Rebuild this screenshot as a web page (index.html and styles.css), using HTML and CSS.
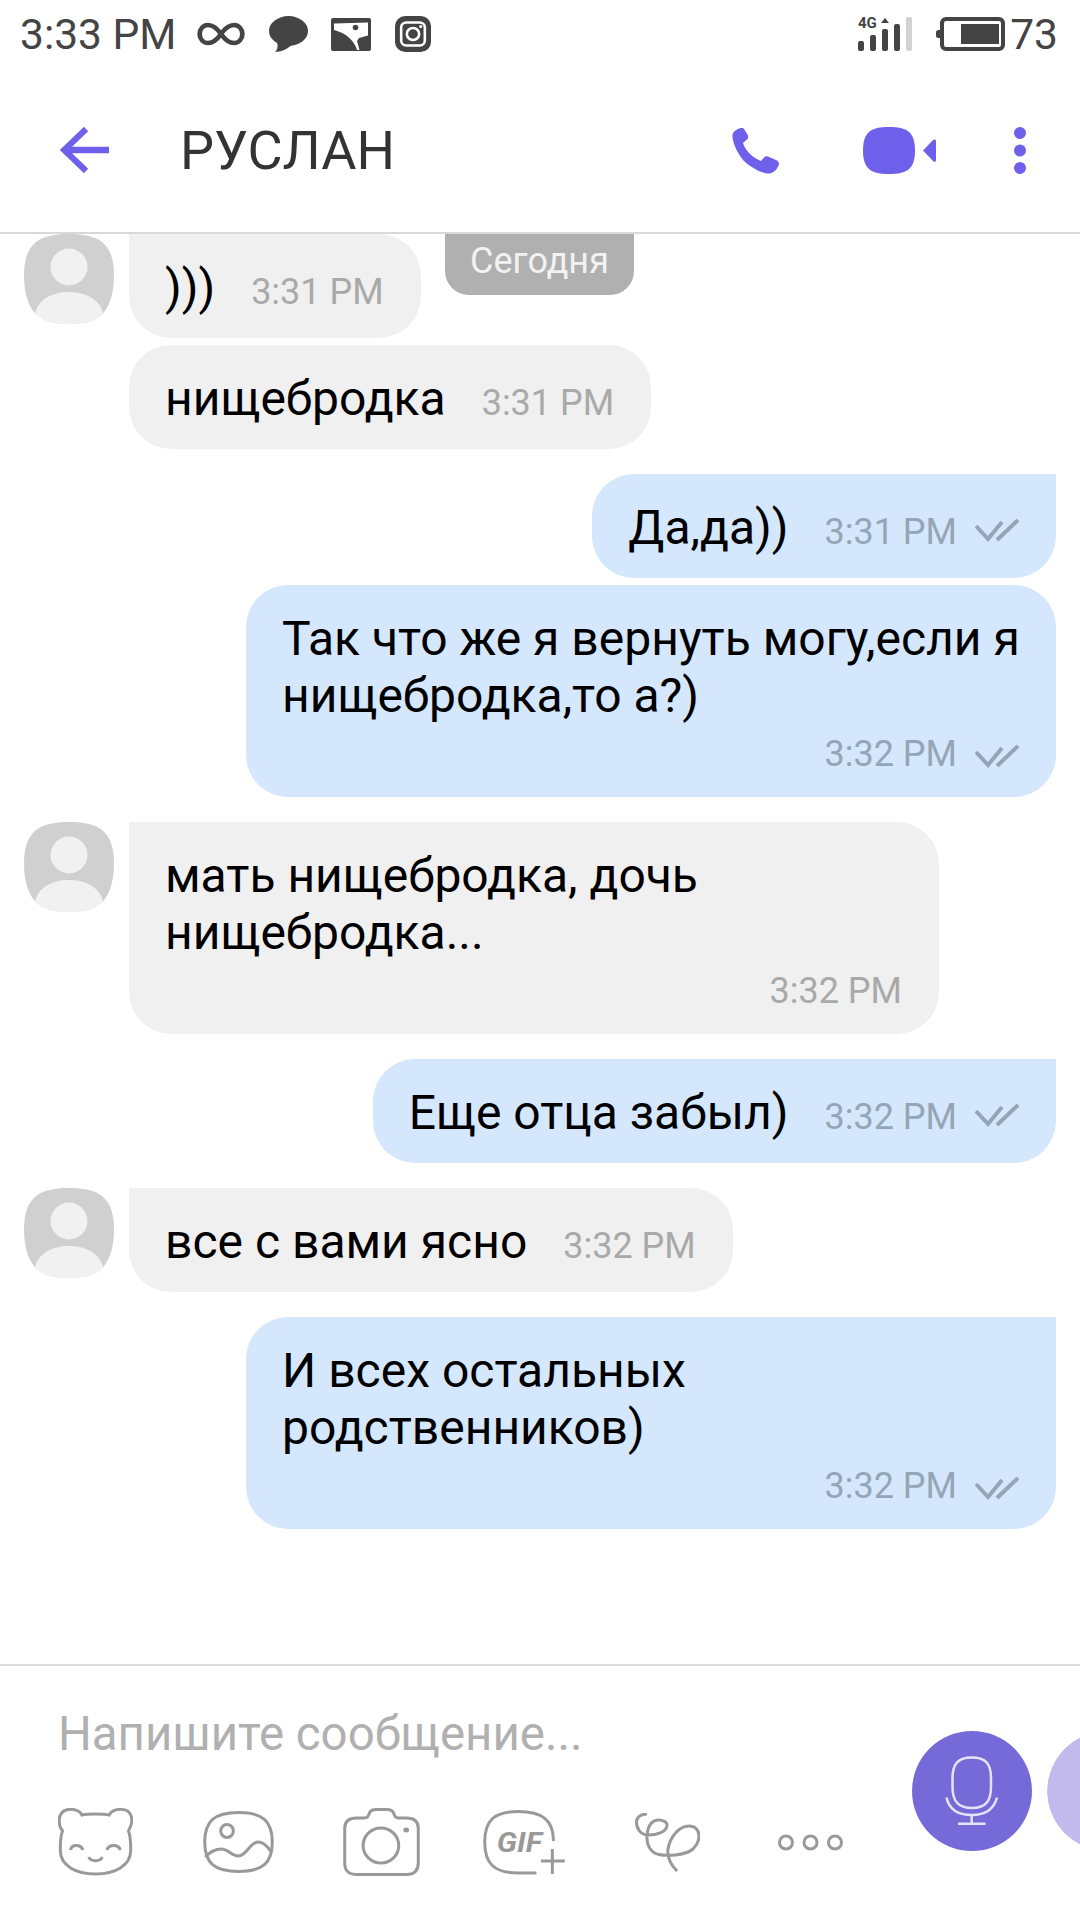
FILE: index.html
```html
<!DOCTYPE html>
<html lang="ru">
<head>
    <meta charset="UTF-8">
    <title>РУСЛАН</title>
    <link rel="stylesheet" href="styles.css">
</head>
<body>

<!-- Статус-бар -->
<div class="status-bar">
    <span class="status-time">3:33 PM</span>
    <svg class="ico-infinity" width="48" height="24" viewBox="0 0 46 24" preserveAspectRatio="none"><path d="M23 12C19 6 15 3 10.5 3C6 3 2.5 7 2.5 12C2.5 17 6 21 10.5 21C15 21 19 18 23 12C27 6 31 3 35.5 3C40 3 43.5 7 43.5 12C43.5 17 40 21 35.5 21C31 21 27 18 23 12Z" fill="none" stroke="#444" stroke-width="4.5"/></svg>
    <svg class="ico-speech" width="39" height="36" viewBox="0 0 38 36" preserveAspectRatio="none"><ellipse cx="19" cy="15" rx="19" ry="15" fill="#444"/><path d="M8 27C9 31 8 34 6 36C12 36 18 33 22 29Z" fill="#444"/></svg>
    <svg class="ico-picture" width="40" height="33" viewBox="0 0 40 33"><rect width="40" height="33" rx="2" fill="#444"/><path d="M3 5.5L37 4.5V17.5L28 20L26 23L28.5 32H26C24 24 16 15 3 12Z" fill="#fff"/><circle cx="24.5" cy="9.5" r="2.8" fill="#444"/></svg>
    <svg class="ico-insta" width="36" height="36" viewBox="0 0 35 36" preserveAspectRatio="none"><rect width="35" height="36" rx="10" fill="#444"/><rect x="6" y="6.5" width="23" height="23" rx="5" fill="none" stroke="#fff" stroke-width="2.5"/><circle cx="17.5" cy="18" r="6" fill="none" stroke="#fff" stroke-width="2.5"/><circle cx="25" cy="10.5" r="1.5" fill="#fff"/></svg>
    <svg class="ico-signal" width="54" height="34" viewBox="0 0 54 34">
        <text x="0" y="11" class="signal-label">4G</text>
        <path d="M23 6L27 1L31 6Z" fill="#444"/>
        <rect x="0" y="24" width="6" height="10" rx="2" fill="#444"/>
        <rect x="12" y="18" width="6" height="16" rx="2" fill="#444"/>
        <rect x="24" y="12" width="6" height="22" rx="2" fill="#444"/>
        <rect x="36" y="7" width="6" height="27" rx="2" fill="#444"/>
        <rect x="48" y="0" width="6" height="34" rx="2" fill="#d2d2d2"/>
    </svg>
    <svg class="ico-battery" width="69" height="34" viewBox="0 0 69 34"><rect x="0" y="13" width="6" height="8" rx="2.5" fill="#444"/><rect x="6" y="2" width="61" height="30" rx="4" fill="none" stroke="#444" stroke-width="4"/><rect x="25" y="7" width="38" height="20" fill="#444"/></svg>
    <span class="status-level">73</span>
</div>

<!-- Шапка чата -->
<div class="header">
    <svg class="back" width="49" height="46" viewBox="0 0 47 44" preserveAspectRatio="none"><path d="M47 22H5M25 2L4 22L25 42" fill="none" stroke="#6f60ec" stroke-width="6"/></svg>
    <div class="title">РУСЛАН</div>
    <svg class="ico-phone" width="47" height="47" viewBox="0 0 47 47"><path d="M9 1C6 1.5 1 4 .5 8C0 14 4 24 11 33C19 41 30 46.5 37 46.5C41 46.5 46 42 47 37C47 35.5 46 34 44 33L36 29.5C34.5 29 33 29.5 32 30.5L29 34C24 32 20 29 17 26C14 23 12 19 11 16L15 12.5C16 11.5 16.5 10 16 8.5L12 2C11.5 1 10 .8 9 1Z" fill="#6f60ec"/></svg>
    <svg class="ico-video" width="73" height="47" viewBox="0 0 73 47"><path d="M26 0C44 0 52 5 52 23.5C52 42 44 47 26 47C8 47 0 42 0 23.5C0 5 8 0 26 0Z" fill="#6f60ec"/><path d="M60 23.5L70 13C71.5 12 73 12.5 73 14V33C73 35 71.5 35.5 70 34Z" fill="#6f60ec"/></svg>
    <svg class="ico-more" width="12" height="47" viewBox="0 0 12 47"><circle cx="6" cy="6" r="6" fill="#6f60ec"/><circle cx="6" cy="23.5" r="6" fill="#6f60ec"/><circle cx="6" cy="41" r="6" fill="#6f60ec"/></svg>
</div>

<!-- Сообщения -->
<div class="chat">
    <div class="date-pill">Сегодня</div>

    <div class="row in top">
        <svg class="avatar" width="90" height="90" viewBox="0 0 90 90"><use href="#avatar-shape"/></svg>
        <div class="bubble first"><span class="text">)))</span><span class="time">3:31 PM</span></div>
    </div>
    <div class="row in next">
        <div class="bubble"><span class="text">нищебродка</span><span class="time">3:31 PM</span></div>
    </div>

    <div class="row out group">
        <div class="bubble first"><span class="text">Да,да))</span><span class="time">3:31 PM</span><svg class="check" width="44" height="23" viewBox="0 0 44 23"><use href="#check-shape"/></svg></div>
    </div>
    <div class="row out">
        <div class="bubble wide">
            <div class="text">Так что же я вернуть могу,если я<br>нищебродка,то а?)</div>
            <div class="meta"><span class="time">3:32 PM</span><svg class="check" width="44" height="23" viewBox="0 0 44 23"><use href="#check-shape"/></svg></div>
        </div>
    </div>

    <div class="row in group">
        <svg class="avatar" width="90" height="90" viewBox="0 0 90 90"><use href="#avatar-shape"/></svg>
        <div class="bubble first wide">
            <div class="text">мать нищебродка, дочь<br>нищебродка...</div>
            <div class="meta"><span class="time">3:32 PM</span></div>
        </div>
    </div>

    <div class="row out group">
        <div class="bubble first"><span class="text">Еще отца забыл)</span><span class="time">3:32 PM</span><svg class="check" width="44" height="23" viewBox="0 0 44 23"><use href="#check-shape"/></svg></div>
    </div>

    <div class="row in group">
        <svg class="avatar" width="90" height="90" viewBox="0 0 90 90"><use href="#avatar-shape"/></svg>
        <div class="bubble first"><span class="text">все с вами ясно</span><span class="time">3:32 PM</span></div>
    </div>

    <div class="row out group">
        <div class="bubble first wide">
            <div class="text">И всех остальных<br>родственников)</div>
            <div class="meta"><span class="time">3:32 PM</span><svg class="check" width="44" height="23" viewBox="0 0 44 23"><use href="#check-shape"/></svg></div>
        </div>
    </div>
</div>

<!-- Поле ввода -->
<div class="composer">
    <div class="placeholder">Напишите сообщение...</div>
    <div class="tools">
        <svg class="tool-face" width="75" height="68" viewBox="0 0 66 68" preserveAspectRatio="none"><path d="M21 7C25 5.5 41 5.5 45 7C47 2 53 1 57 1.5C63 2 65 8 65 13C65 17 63 20 62 23C64 28 64 36 64 42C64 58 50 66 33 66C16 66 2 58 2 42C2 36 2 28 4 23C2 20 1 17 1 13C1 7 4 2 9 1.5C13 1 19 2 21 7Z"/><path d="M11 42C12 36 20 36 22 42M43 42C45 36 53 36 55 42M27 49C29 54 37 54 39 49"/></svg>
        <svg class="tool-image" width="71" height="62" viewBox="0 0 62 62" preserveAspectRatio="none"><path d="M31 1.5C52 1.5 60.5 10 60.5 31C60.5 52 52 60.5 31 60.5C10 60.5 1.5 52 1.5 31C1.5 10 10 1.5 31 1.5Z"/><ellipse cx="21" cy="20" rx="5.5" ry="6.5"/><path d="M2 46C7 40 12 38 16 38C22 38 25 45 31 45C38 45 41 31 48 31C53 31 56 35 59 40"/></svg>
        <svg class="tool-camera" width="77" height="68" viewBox="0 0 67 68" preserveAspectRatio="none"><path d="M12 10H19C22 10 22 8 23 5C24 2 26 1.5 29 1.5H38C41 1.5 43 2 44 5C45 8 45 10 48 10H55C62 10 65.5 13 65.5 20V55C65.5 63 62 66.5 55 66.5H12C5 66.5 1.5 63 1.5 55V20C1.5 13 5 10 12 10Z"/><ellipse cx="33" cy="37.5" rx="15.5" ry="17.5"/><ellipse class="solid" cx="55" cy="22" rx="2.5" ry="2.5"/></svg>
        <svg class="tool-gif" width="83" height="65" viewBox="0 0 73 65" preserveAspectRatio="none"><path d="M62 31C62 10 52 1.5 31 1.5C10 1.5 1.5 10 1.5 32C1.5 54 10 63 31 63H47M61 39V64M51 51H72"/><text x="12" y="42" class="gif-label">GIF</text></svg>
        <svg class="tool-doodle" width="65" height="59" viewBox="0 0 65 59"><path d="M12 1C6 1 1.5 4 1.5 9C1.5 16 6 22 13 22C22 22 32 19 32 12C32 9 28 7 24 7C17 7 13 13 12 22C11 32 16 40 24 41.5C30 43 50 43 58 36C62 32 64 28 64 23C64 17 60 13 54 13C44 13 35 24 33 36C32 44 36 52 42 58"/></svg>
        <svg class="tool-more" width="65" height="17" viewBox="0 0 65 17"><circle cx="8" cy="8.5" r="6.5"/><circle cx="32.5" cy="8.5" r="6.5"/><circle cx="57" cy="8.5" r="6.5"/></svg>
    </div>
    <div class="send-btn">
        <svg width="120" height="120" viewBox="0 0 120 120"><path d="M59.7 26.5C73 26.5 79 32 79 47V56C79 71 73 77 59.7 77C47 77 40.5 71 40.5 56V47C40.5 32 47 26.5 59.7 26.5Z"/><path d="M34.5 66.5C37 78 46 84 59.7 84C73 84 82 78 85 66.5M59.7 84V92.7M46 92.7H73.5"/></svg>
    </div>
    <div class="send-btn-next"></div>
</div>

<!-- Общие фигуры -->
<svg class="defs" width="0" height="0">
    <defs>
        <g id="avatar-shape">
            <path d="M45 0C76 0 90 10 90 42C90 62 84 76 76 82C68 88 58 90 45 90C32 90 22 88 14 82C6 76 0 62 0 42C0 10 14 0 45 0Z" fill="#d0d0d0"/>
            <ellipse cx="45" cy="33" rx="18.5" ry="18.5" fill="#f1f1f1"/>
            <path d="M11 80C13 66 28 58 45 58C62 58 77 66 79 80C70 88 58 90 45 90C32 90 20 88 11 80Z" fill="#f1f1f1"/>
        </g>
        <g id="check-shape" fill="none" stroke="#94a6b6" stroke-width="4">
            <path d="M1 7L13 20L27 3"/>
            <path d="M22 21L43 1"/>
        </g>
    </defs>
</svg>

</body>
</html>
```

FILE: styles.css
```css
/* Общие стили */
body {
    margin: 0;
    width: 1080px;
    height: 1920px;
    overflow: hidden;
    display: flex;
    flex-direction: column;
    background-color: #fff;
    font-family: Roboto, sans-serif;
}

.defs {
    position: absolute;
}

/* Статус-бар */
.status-bar {
    height: 68px;
    flex: none;
    display: flex;
    align-items: center;
    padding: 0 22px 0 20px;
    color: #444;
    font-size: 42.5px;
}

.ico-infinity {
    margin-left: 21px;
}

.ico-speech {
    margin-left: 24px;
}

.ico-picture {
    margin-left: 23px;
}

.ico-insta {
    margin-left: 24px;
}

.ico-signal {
    margin-left: auto;
    overflow: visible;
}

.ico-battery {
    margin-left: 24px;
}

.status-level {
    margin-left: 5px;
}

.signal-label {
    font-family: Roboto, sans-serif;
    font-size: 15px;
    font-weight: 700;
    fill: #444;
}

/* Шапка */
.header {
    height: 166px;
    flex: none;
    box-sizing: border-box;
    display: flex;
    align-items: center;
    padding: 0 54px 0 60px;
    border-bottom: 2px solid #d9d9d9;
}

.title {
    margin-left: 71px;
    font-size: 54px;
    color: #333;
}

.ico-phone {
    margin-left: auto;
}

.ico-video {
    margin-left: 84px;
}

.ico-more {
    margin-left: 78px;
}

/* Сообщения */
.chat {
    position: relative;
    flex: 1;
    overflow: hidden;
    display: flex;
    flex-direction: column;
}

.date-pill {
    position: absolute;
    top: 0;
    left: 445px;
    width: 189px;
    height: 61px;
    box-sizing: border-box;
    padding-top: 5px;
    text-align: center;
    font-size: 36px;
    line-height: 44px;
    color: #f2f2f2;
    background-color: #b0b0b0;
    border-radius: 0 0 24px 24px;
}

.row {
    display: flex;
    align-items: flex-start;
    margin-top: 7px;
}

.row.top {
    margin-top: 0;
}

.row.group {
    margin-top: 25px;
}

.row.in {
    padding-left: 24px;
}

.row.in.next {
    padding-left: 129px;
}

.row.out {
    justify-content: flex-end;
    padding-right: 24px;
}

.avatar {
    flex: none;
    margin-right: 15px;
}

.bubble {
    display: flex;
    align-items: baseline;
    box-sizing: border-box;
    height: 104px;
    padding: 25px 37px 22px 36px;
    border-radius: 42px;
    font-size: 48px;
    line-height: 57px;
    color: #000;
    white-space: nowrap;
}

.bubble.wide {
    display: block;
    height: 212px;
    width: 810px;
}

.in .bubble {
    background-color: #f0f0f0;
}

.out .bubble {
    background-color: #d4e7fd;
}

.in .bubble.first {
    border-top-left-radius: 0;
}

.out .bubble.first {
    border-top-right-radius: 0;
}

.time {
    margin-left: 36px;
    font-size: 36px;
    line-height: 1;
    color: #a9a9a9;
}

.out .time {
    color: #94a6b6;
}

.check {
    margin-left: 18px;
    flex: none;
    align-self: flex-end;
    margin-bottom: 14px;
}

.meta {
    display: flex;
    align-items: baseline;
    justify-content: flex-end;
    box-sizing: border-box;
    height: 51px;
    padding-top: 12px;
}

.meta .check {
    margin-bottom: 7px;
}

/* Поле ввода */
.composer {
    position: relative;
    height: 256px;
    flex: none;
    box-sizing: border-box;
    padding: 38px 0 0 58px;
    border-top: 2px solid #dcdcdc;
}

.placeholder {
    font-size: 47.4px;
    line-height: 60px;
    color: #b0b0b0;
}

.tools {
    display: flex;
    align-items: center;
    margin-top: 44px;
    height: 68px;
}

.tools svg {
    flex: none;
    fill: none;
    stroke: #999;
    stroke-width: 3;
}

.tools svg path,
.tools svg ellipse,
.tools svg circle {
    vector-effect: non-scaling-stroke;
}

.tools .solid {
    fill: #999;
    stroke: none;
}

.gif-label {
    font-family: Roboto, sans-serif;
    font-size: 27px;
    font-weight: 700;
    font-style: italic;
    fill: #999;
    stroke: none;
}

.tool-image {
    margin-left: 70px;
}

.tool-camera {
    margin-left: 69px;
}

.tool-gif {
    margin-left: 63px;
}

.tool-doodle {
    margin-left: 69px;
}

.tool-more {
    margin-left: 78px;
}

.send-btn {
    position: absolute;
    top: 65px;
    left: 912px;
    width: 120px;
    height: 120px;
    border-radius: 50%;
    background-color: #7669d8;
}

.send-btn svg {
    display: block;
    fill: none;
    stroke: #e6e3f8;
    stroke-width: 2.5;
}

.send-btn-next {
    position: absolute;
    top: 65px;
    left: 1047px;
    width: 33px;
    height: 120px;
    background: radial-gradient(circle 60px at 60px 60px, #c2b9ec 99%, transparent 100%);
}
```
